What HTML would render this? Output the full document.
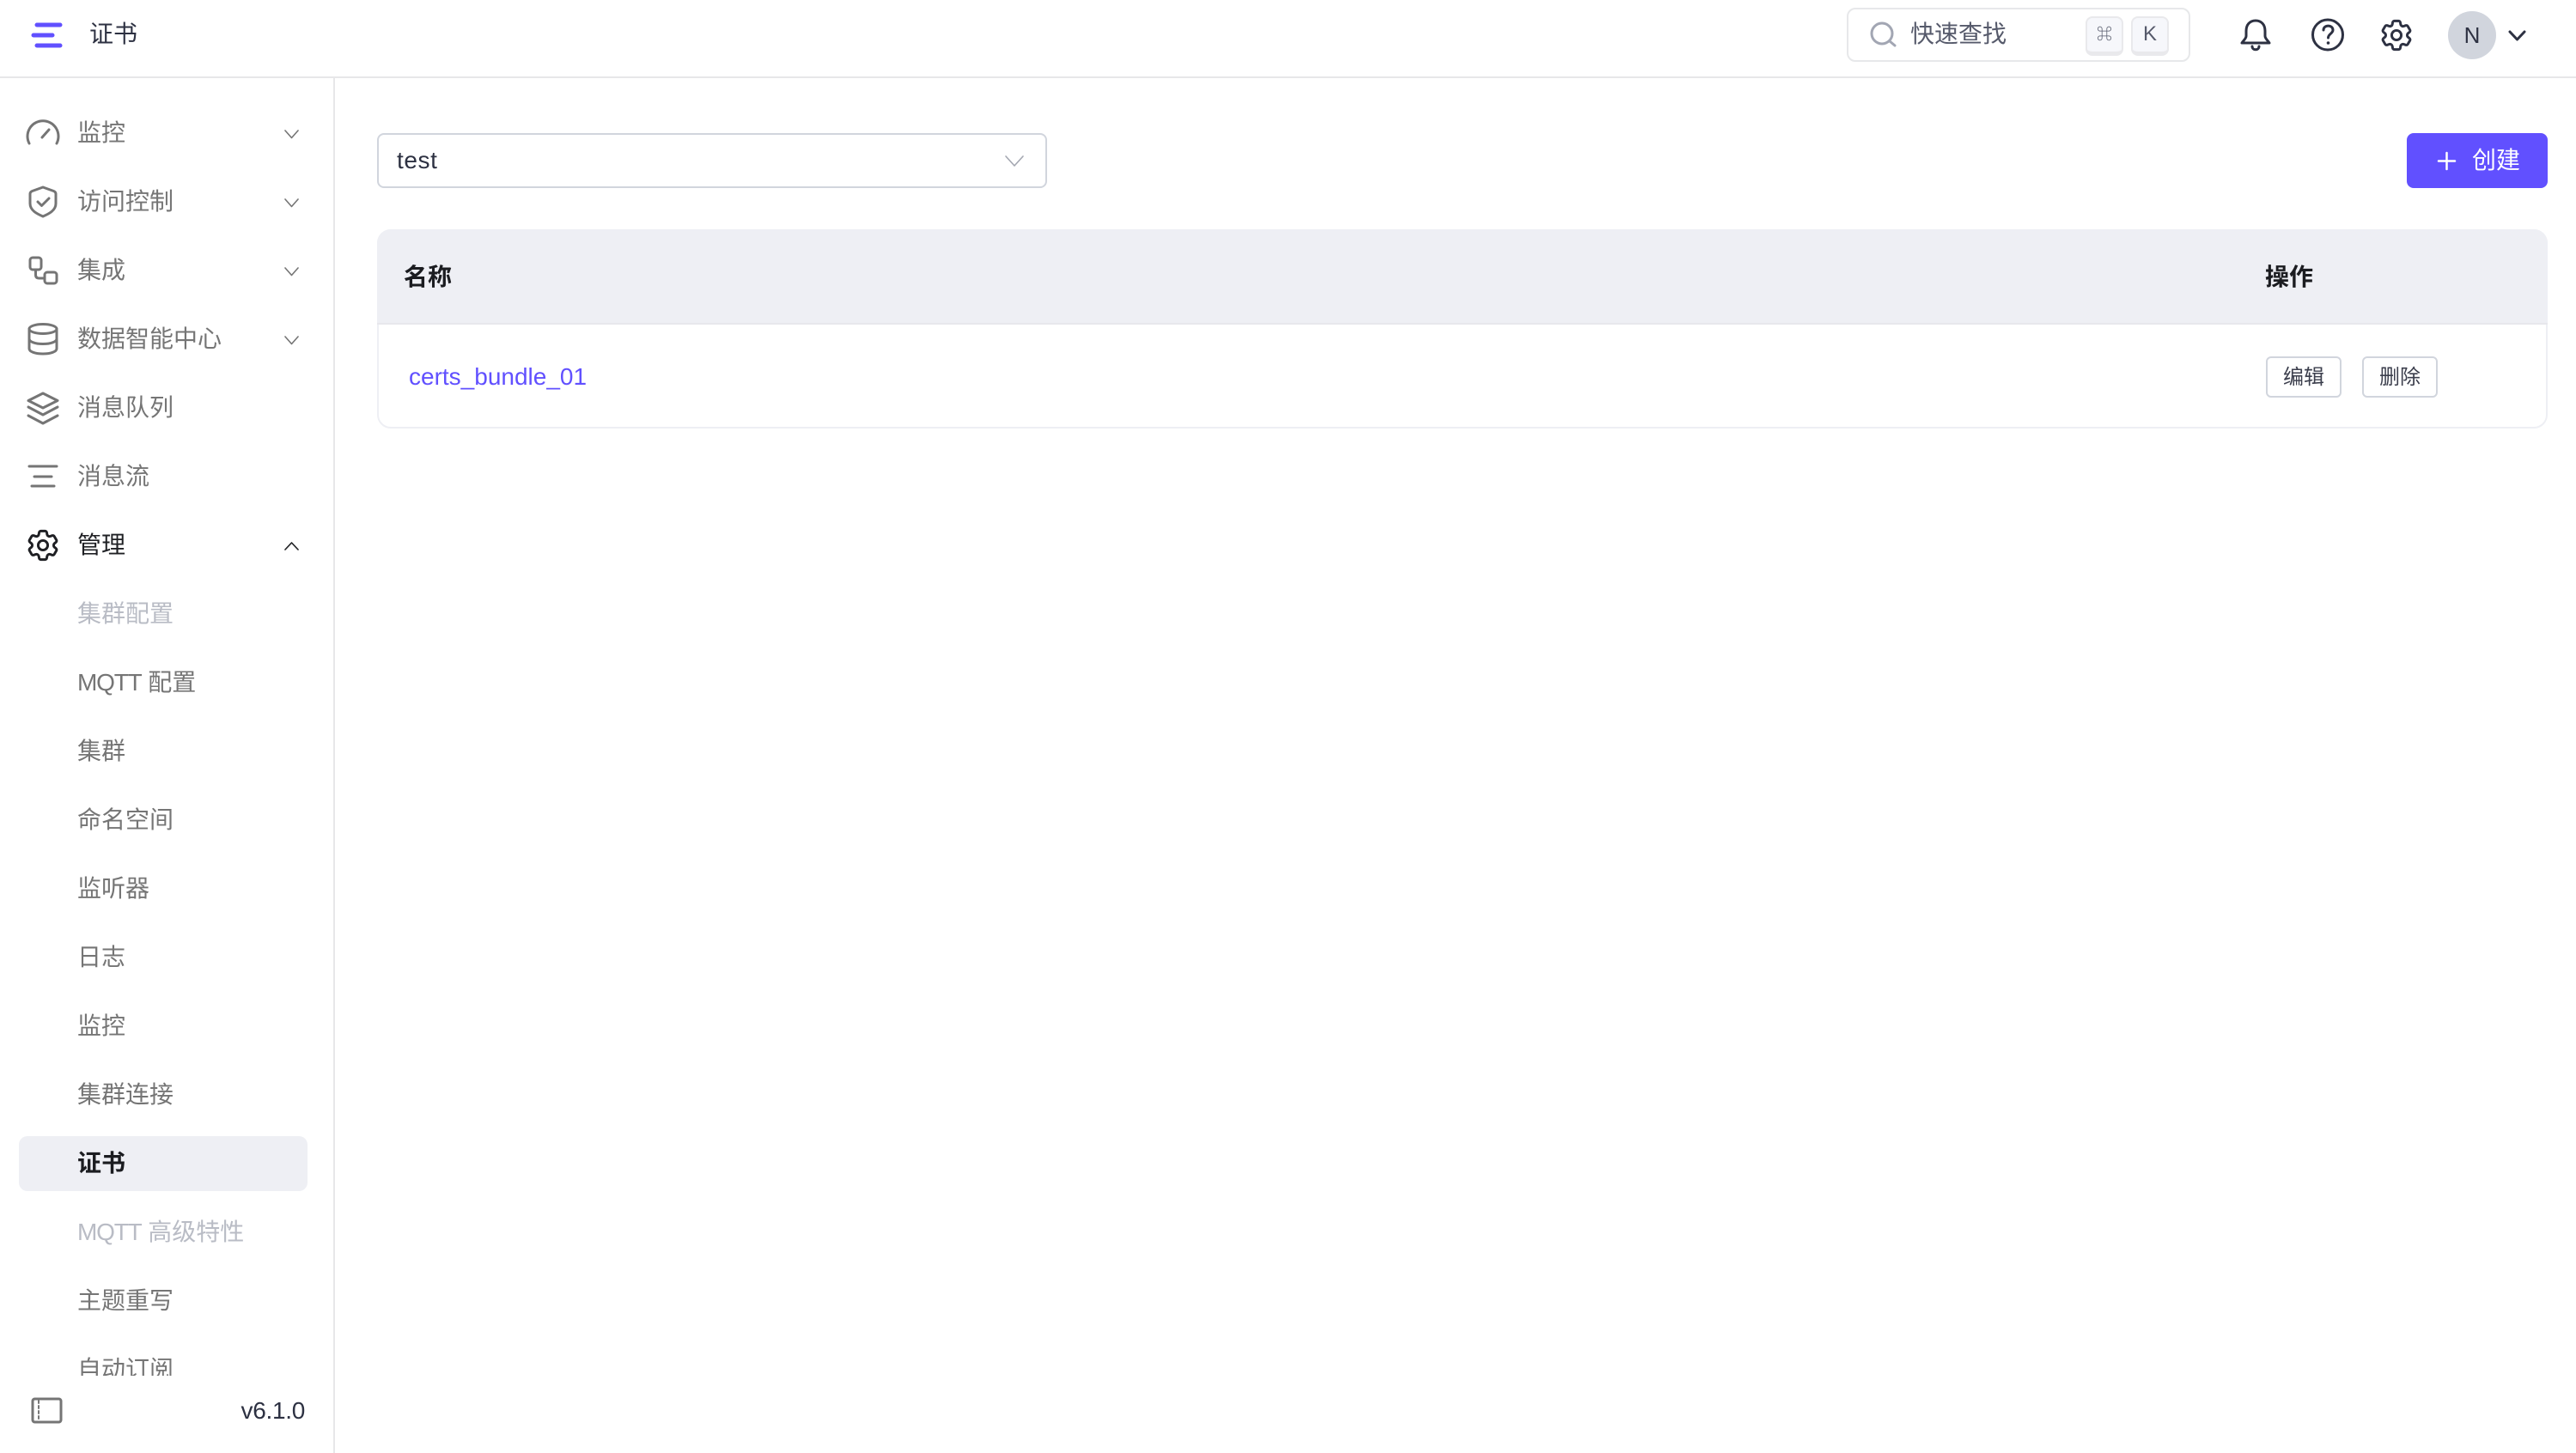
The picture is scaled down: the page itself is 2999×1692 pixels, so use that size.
<!DOCTYPE html>
<html lang="zh">
<head>
<meta charset="utf-8">
<title>证书</title>
<style>
html,body{margin:0;padding:0;width:2999px;height:1692px;overflow:hidden;background:#fff}
body{position:relative;font-family:"Liberation Sans","Noto Sans CJK SC",sans-serif;font-size:28px;color:#757575}
.a{position:absolute;white-space:nowrap;line-height:40px;height:40px}
.box{position:absolute;box-sizing:border-box}
#clip{position:absolute;left:0;top:91px;width:388px;height:1511px;overflow:hidden}
#clip .a{left:90px}
.d{color:#b9bcc5}
.m{letter-spacing:-1.2px}
svg{position:absolute;left:0;top:0}
</style>
</head>
<body>
<!-- frame lines -->
<div class="box" style="left:0;top:89px;width:2999px;height:2px;background:#e7e7e9"></div>
<div class="box" style="left:388px;top:91px;width:2px;height:1601px;background:#e7e7e9"></div>

<!-- header -->
<div class="a" style="left:104px;top:20px;color:#2d3142">证书</div>

<!-- search -->
<div class="box" style="left:2150px;top:9px;width:400px;height:63px;border:2px solid #e7e8ea;border-radius:10px"></div>
<div class="a" style="left:2224px;top:20px;color:#565a6b">快速查找</div>
<div class="box" style="left:2428px;top:19px;width:44px;height:46px;background:#f6f7fb;border:2px solid #e9e9ec;border-bottom-width:5px;border-radius:8px;font-size:18px;font-weight:700;line-height:38px;text-align:center;color:#565a6b">⌘</div>
<div class="box" style="left:2481px;top:19px;width:44px;height:46px;background:#f6f7fb;border:2px solid #e9e9ec;border-bottom-width:5px;border-radius:8px;font-size:24px;line-height:38px;text-align:center;color:#565a6b">K</div>

<!-- avatar -->
<div class="box" style="left:2850px;top:13px;width:56px;height:56px;border-radius:50%;background:#d1d5dd;color:#2d3142;font-size:26px;line-height:56px;text-align:center">N</div>

<!-- sidebar menu -->
<div class="box" style="left:22px;top:1323px;width:336px;height:64px;background:#eeeff4;border-radius:10px"></div>
<div id="clip">
<div class="a" style="top:44px">监控</div>
<div class="a" style="top:124px">访问控制</div>
<div class="a" style="top:204px">集成</div>
<div class="a" style="top:284px">数据智能中心</div>
<div class="a" style="top:364px">消息队列</div>
<div class="a" style="top:444px">消息流</div>
<div class="a" style="top:524px;color:#1f2024">管理</div>
<div class="a d" style="top:604px">集群配置</div>
<div class="a" style="top:684px"><span class="m">MQTT</span> 配置</div>
<div class="a" style="top:764px">集群</div>
<div class="a" style="top:844px">命名空间</div>
<div class="a" style="top:924px">监听器</div>
<div class="a" style="top:1004px">日志</div>
<div class="a" style="top:1084px">监控</div>
<div class="a" style="top:1164px">集群连接</div>
<div class="a" style="top:1244px;color:#1b1c20;font-weight:700">证书</div>
<div class="a d" style="top:1324px"><span class="m">MQTT</span> 高级特性</div>
<div class="a" style="top:1404px">主题重写</div>
<div class="a" style="top:1484px">自动订阅</div>
</div>
<div class="a" style="left:280px;top:1623px;width:75px;text-align:right;color:#2d3142;letter-spacing:-.3px">v6.1.0</div>

<!-- select -->
<div class="box" style="left:439px;top:155px;width:780px;height:64px;border:2px solid #d1d5dd;border-radius:8px"></div>
<div class="a" style="left:462px;top:167px;color:#2d3142;letter-spacing:.6px">test</div>

<!-- create -->
<div class="box" style="left:2802px;top:155px;width:164px;height:64px;background:#6150ff;border-radius:8px"></div>
<div class="a" style="left:2878px;top:167px;color:#fff">创建</div>

<!-- table -->
<div class="box" style="left:439px;top:267px;width:2527px;height:232px;border:2px solid #eeeff4;border-radius:16px"></div>
<div class="box" style="left:439px;top:267px;width:2527px;height:111px;background:#eeeff4;border-radius:16px 16px 0 0;border-bottom:2px solid #e7e7ec"></div>
<div class="a" style="left:470px;top:303px;color:#1b1c20;font-weight:700">名称</div>
<div class="a" style="left:2637px;top:303px;color:#1b1c20;font-weight:700">操作</div>
<div class="a" style="left:476px;top:419px;color:#6150ff">certs_bundle_01</div>
<div class="box" style="left:2638px;top:415px;width:88px;height:48px;border:2px solid #d1d5dd;border-radius:6px;font-size:24px;line-height:45px;text-align:center;color:#3b3e4c">编辑</div>
<div class="box" style="left:2750px;top:415px;width:88px;height:48px;border:2px solid #d1d5dd;border-radius:6px;font-size:24px;line-height:45px;text-align:center;color:#3b3e4c">删除</div>

<!-- all icons -->
<svg width="2999" height="1692" viewBox="0 0 2999 1692" fill="none" stroke-linecap="round" stroke-linejoin="round">
<defs>
<path id="g" d="M9.594 3.94c.09-.542.56-.94 1.11-.94h2.593c.55 0 1.02.398 1.11.94l.213 1.281c.063.374.313.686.645.87.074.04.147.083.22.127.325.196.72.257 1.075.124l1.217-.456a1.125 1.125 0 0 1 1.37.49l1.296 2.247a1.125 1.125 0 0 1-.26 1.431l-1.003.827c-.293.241-.438.613-.43.992a7.723 7.723 0 0 1 0 .255c-.008.378.137.75.43.991l1.004.827c.424.35.534.955.26 1.43l-1.298 2.247a1.125 1.125 0 0 1-1.369.491l-1.217-.456c-.355-.133-.75-.072-1.076.124a6.47 6.47 0 0 1-.22.128c-.331.183-.581.495-.644.869l-.213 1.281c-.09.543-.56.94-1.11.94h-2.594c-.55 0-1.019-.398-1.11-.94l-.213-1.281c-.062-.374-.312-.686-.644-.87a6.52 6.52 0 0 1-.22-.127c-.325-.196-.72-.257-1.076-.124l-1.217.456a1.125 1.125 0 0 1-1.369-.49l-1.297-2.247a1.125 1.125 0 0 1 .26-1.431l1.004-.827c.292-.24.437-.613.43-.991a6.932 6.932 0 0 1 0-.255c.007-.38-.138-.751-.43-.992l-1.004-.827a1.125 1.125 0 0 1-.26-1.43l1.297-2.247a1.125 1.125 0 0 1 1.37-.491l1.216.456c.356.133.751.072 1.076-.124.072-.044.146-.086.22-.128.332-.183.582-.495.644-.869l.214-1.28ZM15 12a3 3 0 1 1-6 0 3 3 0 0 1 6 0Z"/>
</defs>
<!-- logo -->
<g stroke="#6150ff" stroke-width="5">
<path d="M43 29H70M39 41H61M43 53H70"/>
</g>
<!-- sidebar icons -->
<g stroke="#757575" stroke-width="3">
<path d="M34 167A18 18 0 1 1 66 167"/>
<path d="M49 160L57 151"/>
<path d="M50 218L62.500 222.500Q65 223.500 65 226V237C65 245 57 249 50 252C43 249 35 245 35 237V226Q35 223.500 37.500 222.500Z"/>
<path d="M44 235L48.500 239.500L57 231"/>
<rect x="35" y="300" width="13" height="14" rx="3"/>
<rect x="52" y="317" width="14" height="13" rx="3"/>
<path d="M41.500 314V320Q41.500 324 45.500 324H52"/>
<ellipse cx="50" cy="383" rx="16" ry="5.500"/>
<path d="M34 383V406C34 409.500 41 412 50 412S66 409.500 66 406V383M34 394.500C34 398 41 400.500 50 400.500S66 398 66 394.500"/>
<path d="M50 458L67 466.500L50 475L33 466.500Z"/>
<path d="M33 474L50 483L67 474M33 484L50 493L67 484"/>
<path d="M34 543H66M40 555H60M37 566H63"/>
<rect x="38" y="1629" width="33" height="27" rx="2.500"/>
<path d="M45 1631V1654" stroke-width="2" stroke-dasharray="3 3"/>
</g>
<use href="#g" transform="translate(27.800 612.800) scale(1.850)" stroke="#1f2024" stroke-width="1.600"/>
<!-- sidebar chevrons -->
<g stroke="#757575" stroke-width="1.600">
<path d="M332 152L339.500 160.500L347 152M332 232L339.500 240.500L347 232M332 312L339.500 320.500L347 312M332 392L339.500 400.500L347 392"/>
</g>
<path d="M332 640L339.500 632L347 640" stroke="#1f2024" stroke-width="1.600"/>
<!-- select chevron -->
<path d="M1171 182L1181 193L1191 182" stroke="#a4a7b1" stroke-width="1.600"/>
<!-- search -->
<circle cx="2191" cy="39" r="12" stroke="#a2a6b3" stroke-width="3"/>
<path d="M2200 48L2206 53" stroke="#a2a6b3" stroke-width="3"/>
<!-- bell -->
<g stroke="#2d3142" stroke-width="3">
<path d="M2626 24C2619 24 2615 29 2615 36V42C2615 45 2611 48 2610 50H2642C2641 48 2637 45 2637 42V36C2637 29 2633 24 2626 24Z"/>
<path d="M2622 54C2622 59 2630 59 2630 54"/>
<circle cx="2710" cy="40.500" r="17.500"/>
<path d="M2705 35C2705 28.500 2716 28.500 2716 35C2716 39 2710.500 39.500 2710.500 44"/>
</g>
<circle cx="2710.500" cy="50" r="1.800" fill="#2d3142"/>
<use href="#g" transform="translate(2767.800 18.800) scale(1.850)" stroke="#2d3142" stroke-width="1.600"/>
<path d="M2922 37L2930.500 46L2939 37" stroke="#2d3142" stroke-width="3"/>
<!-- plus -->
<path d="M2848.500 178V197M2839 187.500H2858" stroke="#fff" stroke-width="2.500"/>
</svg>
</body>
</html>
